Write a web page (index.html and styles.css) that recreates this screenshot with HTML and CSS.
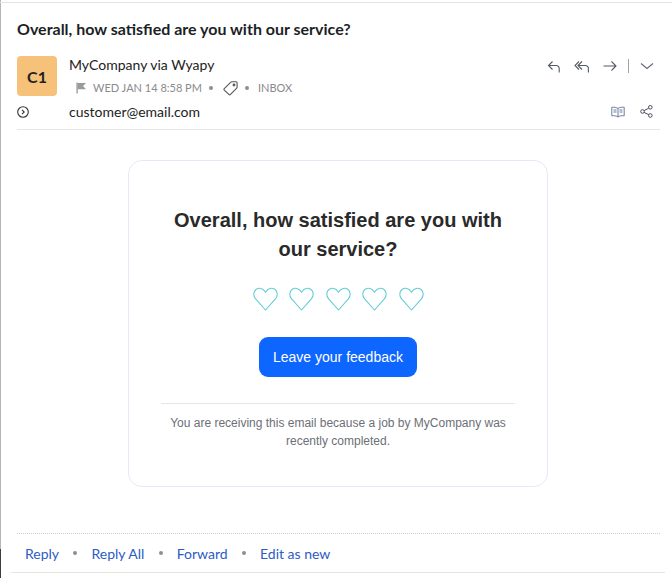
FILE: index.html
```html
<!DOCTYPE html>
<html lang="en">
<head>
<meta charset="utf-8">
<title>Overall, how satisfied are you with our service?</title>
<link rel="stylesheet" href="styles.css">
</head>
<body>
<main class="mail">
  <h1 class="subject">Overall, how satisfied are you with our service?</h1>
  <header class="head">
    <div class="avatar">C1</div>
    <div class="sender">
      <div class="name">MyCompany via Wyapy</div>
      <div class="meta">
        <svg class="flag" width="12" height="12" viewBox="0 0 12 12"><path d="M1.5 0.5h1.200v11H1.500z" fill="#8c8c8c"/><path d="M2.700 1h8.300L8 4l3 3.200H2.700z" fill="#9a9a9a"/></svg>
        <span class="date">WED JAN 14 8:58 PM</span>
        <i class="dot dot-a"></i>
        <svg class="tag" width="16" height="16" viewBox="0 0 16 16" fill="none" stroke="#555" stroke-width="1.100"><path d="M1.300 8.600 7.600 2.400c.4-.4.8-.6 1.300-.6h4.200c.6 0 1 .4 1 1v4.300c0 .5-.2.9-.6 1.300l-6 6c-.5.5-1.100.5-1.600 0L1.300 10.200c-.5-.5-.5-1.100 0-1.600z"/><circle cx="11" cy="5" r=".9"/></svg>
        <i class="dot dot-b"></i>
        <span class="date">INBOX</span>
      </div>
    </div>
    <div class="actions">
      <svg width="14" height="14" viewBox="0 0 14 14" fill="none" stroke="#555b66" stroke-width="1.100"><path d="M5.500 2.500 1.500 6.500l4 4M1.500 6.500h7.500c2 0 3.200 1.200 3.200 3.200V13.500"/></svg>
      <svg width="16" height="14" viewBox="0 0 16 14" fill="none" stroke="#555b66" stroke-width="1.100"><path d="M5 2.500 1 6.500l4 4M8 2.500 4 6.500l4 4M4 6.500h7c2 0 3.400 1.200 3.400 3.200v3.800"/></svg>
      <svg class="fwd" width="14" height="14" viewBox="0 0 14 14" fill="none" stroke="#555b66" stroke-width="1.100"><path d="M.5 7h12.500M8.500 2.500 13 7l-4.500 4.500"/></svg>
      <span class="bar"></span>
      <svg width="14" height="14" viewBox="0 0 14 14" fill="none" stroke="#667" stroke-width="1.100"><path d="M1 4.500 7 9.500l6-5"/></svg>
    </div>
  </header>
  <div class="torow">
    <svg class="expand" width="12" height="12" viewBox="0 0 12 12" fill="none" stroke="#333" stroke-width="1.100"><circle cx="6" cy="6" r="5.300"/><path d="M5 3.800 7.200 6 5 8.200"/></svg>
    <span class="to">customer@email.com</span>
    <div class="tools">
      <svg width="14" height="12" viewBox="0 0 14 12" fill="none" stroke="#5c7196" stroke-width=".9"><path d="M7 2.500C5.500 1.300 3 1 .8 1.300v8.500C3 9.500 5.500 9.800 7 11c1.500-1.200 4-1.500 6.200-1.200V1.300C11 1 8.500 1.300 7 2.500zM7 2.500V11M2.500 4h3M2.500 6h3M8.500 4h3M8.500 6h3"/></svg>
      <svg width="13" height="13" viewBox="0 0 13 13" fill="none" stroke="#4a4f59" stroke-width="1"><circle cx="2.500" cy="6.500" r="1.800"/><circle cx="10.300" cy="2.300" r="1.800"/><circle cx="10.300" cy="10.500" r="1.800"/><path d="M4.100 5.600 8.700 3.200M4.100 7.400l4.600 2.300"/></svg>
    </div>
  </div>
  <section class="body">
    <div class="card">
      <h2 class="question">Overall, how satisfied are you with our service?</h2>
      <div class="hearts">
        <svg class="heart" viewBox="0 0 25 24"><path d="M12.500 23 2.600 11.800C0 8.800.3 4.500 3 2.500 5.800.4 10 1 12.500 5.200 15 1 19.200.4 22 2.500c2.700 2 3 6.300.4 9.300z"/></svg>
        <svg class="heart" viewBox="0 0 25 24"><path d="M12.500 23 2.600 11.800C0 8.800.3 4.500 3 2.500 5.800.4 10 1 12.500 5.200 15 1 19.200.4 22 2.500c2.700 2 3 6.300.4 9.300z"/></svg>
        <svg class="heart" viewBox="0 0 25 24"><path d="M12.500 23 2.600 11.800C0 8.800.3 4.500 3 2.500 5.800.4 10 1 12.500 5.200 15 1 19.200.4 22 2.500c2.700 2 3 6.300.4 9.300z"/></svg>
        <svg class="heart" viewBox="0 0 25 24"><path d="M12.500 23 2.600 11.800C0 8.800.3 4.500 3 2.500 5.800.4 10 1 12.500 5.200 15 1 19.200.4 22 2.500c2.700 2 3 6.300.4 9.300z"/></svg>
        <svg class="heart" viewBox="0 0 25 24"><path d="M12.500 23 2.600 11.800C0 8.800.3 4.500 3 2.500 5.800.4 10 1 12.500 5.200 15 1 19.200.4 22 2.500c2.700 2 3 6.300.4 9.300z"/></svg>
      </div>
      <a class="cta" href="#">Leave your feedback</a>
      <p class="note">You are receiving this email because a job by MyCompany was recently completed.</p>
    </div>
  </section>
  <footer class="links">
    <a href="#">Reply</a><i class="dot"></i>
    <a href="#">Reply All</a><i class="dot"></i>
    <a href="#">Forward</a><i class="dot"></i>
    <a href="#">Edit as new</a>
  </footer>
</main>
</body>
</html>
```
FILE: styles.css
```css
* { box-sizing: border-box; }
html, body { margin: 0; padding: 0; background: #fff; }
body { width: 672px; height: 578px; overflow: hidden; padding-top: 2px; font-family: Lato, "Liberation Sans", sans-serif; color: #222; background-image: linear-gradient(#b5b5b5 0 549px, #3a3d42 549px); background-size: 1px 100%; background-repeat: no-repeat; }
.mail { width: 672px; border-top: 1px solid #e4e4e4; padding: 15px 12px 0 0; }
.subject { margin: 0 0 0 17px; font-size: 16px; line-height: 22px; font-weight: 700; color: #1c1f26; }
.head { display: flex; margin: 16px 0 0 17px; height: 40px; }
.avatar { width: 40px; height: 40px; border-radius: 4px; background: #f6c27a; display: flex; align-items: center; justify-content: center; font-weight: 700; font-size: 16px; color: #222; }
.sender { margin-left: 12px; flex: 1; }
.name { font-size: 14px; line-height: 18px; }
.meta { display: flex; align-items: center; margin-top: 6px; margin-left: 6px; height: 16px; font-size: 11px; color: #8a8a8e; }
.flag { margin-right: 6px; }
.date { line-height: 16px; }
.dot { display: inline-block; width: 4px; height: 4px; border-radius: 50%; background: #8f8f8f; }
.dot-a { margin: 0 10px 0 7px; }
.dot-b { margin: 0 9px 0 6px; }
.actions { display: flex; align-items: center; height: 20px; margin-right: 6px; }
.actions svg { margin-right: 13px; }
.actions svg:last-child { margin-right: 0; }
.bar { width: 1px; height: 14px; background: #9aa3b5; margin-right: 11px; margin-left: -2px; }
.torow { display: flex; align-items: center; margin: 5px 0 0 17px; height: 22px; padding-bottom: 1px; }
.expand { margin-right: 40px; }
.to { font-size: 14px; flex: 1; }
.tools { display: flex; gap: 15px; align-items: center; margin-right: 7px; }
.body { margin: 6px 0 0 17px; border-top: 1px solid #e6e6e6; height: 405px; padding-top: 30px; border-bottom: 1px dotted #d0d0d0; }
.card { width: 420px; height: 327px; margin-left: 111px; border: 1px solid #e9e7f5; border-radius: 14px; padding: 45px 32px 0; font-family: "Liberation Sans", Arial, sans-serif; display: flex; flex-direction: column; align-items: center; }
.question { margin: 0; font-size: 20px; line-height: 29px; font-weight: 700; color: #2a2a2a; text-align: center; width: 340px; }
.hearts { display: flex; gap: 11.500px; margin-top: 23px; height: 26px; }
.heart { width: 25px; height: 24px; fill: none; stroke: #64cdd6; stroke-width: 1.100; }
.cta { display: flex; align-items: center; justify-content: center; margin-top: 24px; width: 158px; height: 40px; background: #0d66ff; color: #fff; border-radius: 9px; font-size: 14px; text-decoration: none; }
.note { margin: 26px 0 0; width: 354px; border-top: 1px solid #e6e6e6; padding-top: 10px; font-size: 12px; line-height: 18px; color: #6c6f76; text-align: center; }
.links { display: flex; align-items: center; margin: 0 -5px 0 11px; padding: 1px 0 0 14px; height: 39px; font-size: 14px; border-bottom: 1px solid #e4e4e4; }
.links a { color: #2c5cc5; text-decoration: none; }
.links .dot { margin: 0 14.200px 2px 14.200px; }
```
